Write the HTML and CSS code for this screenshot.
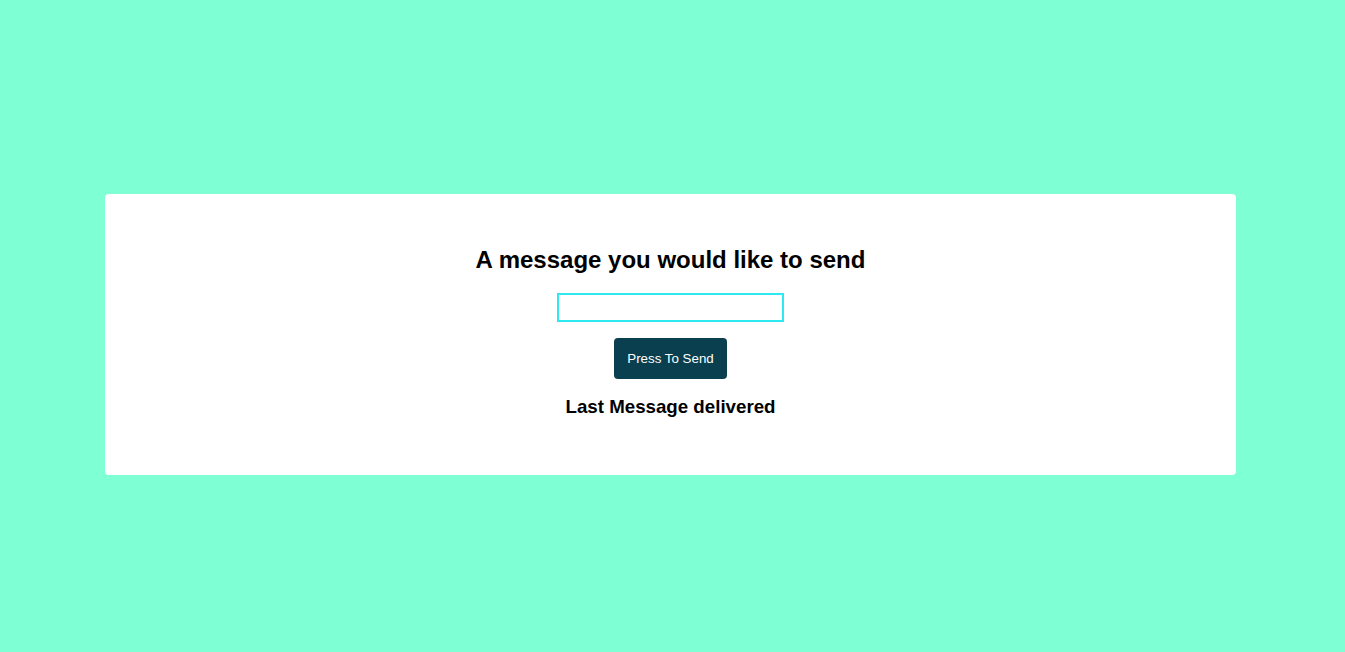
FILE: index.html
```html
<!DOCTYPE html>
<html>
<head>
<meta charset="utf-8">
<link rel="stylesheet" href="styles.css">
</head>
<body>
<div class="page">
  <div class="card">
    <h2 class="title">A message you would like to send</h2>
    <input class="msg-input" type="text">
    <button class="send-btn">Press To Send</button>
    <h3 class="last">Last Message delivered</h3>
  </div>
</div>
</body>
</html>
```
FILE: styles.css
```css
html, body {
  margin: 0;
  padding: 0;
}
body {
  background: #7fffd4;
  font-family: "Liberation Sans", Arial, sans-serif;
}
.page {
  min-height: 100vh;
  box-sizing: border-box;
  padding: 17px 0 0 105px;
  display: flex;
  align-items: center;
}
.card {
  width: 1131px;
  height: 281px;
  box-sizing: border-box;
  background: #ffffff;
  border-radius: 4px;
  padding-top: 46px;
  display: flex;
  flex-direction: column;
  align-items: center;
}
.title {
  margin: 0;
  font-size: 24px;
  line-height: 40px;
  font-weight: bold;
  color: #000;
}
.msg-input {
  margin-top: 13px;
  width: 227px;
  height: 29px;
  box-sizing: border-box;
  border: 2px solid #2ee9f2;
  padding: 0 4px;
  outline: none;
  background: #fff;
}
.send-btn {
  margin-top: 16px;
  width: 113px;
  height: 41px;
  border: none;
  border-radius: 4px;
  background: #0a3f4f;
  color: #ffffff;
  font-family: "Liberation Sans", Arial, sans-serif;
  font-size: 13.33px;
}
.last {
  margin: 16px 0 0;
  font-size: 18.72px;
  line-height: 24px;
  font-weight: bold;
  color: #000;
}
```
